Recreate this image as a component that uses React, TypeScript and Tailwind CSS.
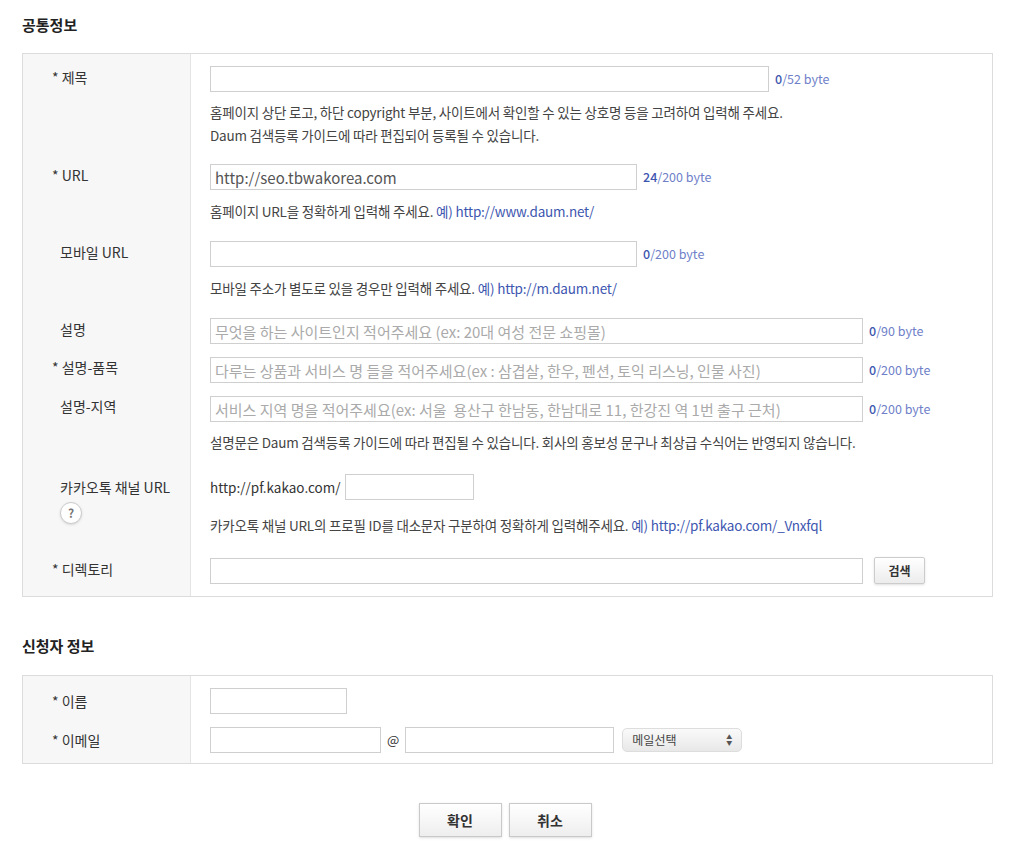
const font = { fontFamily: '"Noto Sans CJK KR", "Noto Sans", sans-serif' };

function Counter({ n, max }: { n: number; max: number }) {
  return (
    <span className="ml-[6px] text-[12.5px] text-[#6f7fc9] whitespace-nowrap">
      <span className="text-[#3d56b0] font-medium">{n}</span>/{max} byte
    </span>
  );
}

const inputCls = 'h-[26px] border border-[#cfcfcf] px-[4px] text-[15px] text-[#555] placeholder:text-[#aaa] outline-none';

function Help({ children }: { children: React.ReactNode }) {
  return <div className="text-[13.5px] text-[#444] leading-[23px] tracking-[-0.2px] pb-[4px]">{children}</div>;
}

function Row({ label, children }: { label: React.ReactNode; children: React.ReactNode }) {
  return (
    <div className="flex">
      {label}
      <div className="flex-1 pl-[19px]">{children}</div>
    </div>
  );
}

const lab = 'w-[168px] shrink-0 bg-[#f7f7f7] border-r border-[#e4e4e4] text-[14px] text-[#333]';

export default function App() {
  return (
    <div className="bg-white w-[1024px] min-h-[841px] px-[22px] pt-[14px]" style={font}>
      <h2 className="text-[15px] font-bold text-[#222] h-[39px] leading-[22px]">공통정보</h2>
      <div className="border border-[#dcdcdc] w-[971px] flex flex-col">
        <Row label={<div className={`${lab} pl-[29px] pt-[13px]`}>* 제목</div>}>
          <div className="pt-[12px] flex items-center"><input className={`${inputCls} w-[559px]`} /><Counter n={0} max={52} /></div>
          <div className="pt-[9px]"><Help>홈페이지 상단 로고, 하단 copyright 부분, 사이트에서 확인할 수 있는 상호명 등을 고려하여 입력해 주세요.<br />Daum 검색등록 가이드에 따라 편집되어 등록될 수 있습니다.</Help></div>
        </Row>
        <Row label={<div className={`${lab} pl-[29px] pt-[14px]`}>* URL</div>}>
          <div className="pt-[13px] flex items-center"><input className={`${inputCls} w-[427px]`} defaultValue="http://seo.tbwakorea.com" /><Counter n={24} max={200} /></div>
          <div className="pt-[10px]"><Help>홈페이지 URL을 정확하게 입력해 주세요. <span className="text-[#3d56b0]">예) http://www.daum.net/</span></Help></div>
        </Row>
        <Row label={<div className={`${lab} pl-[37px] pt-[15px]`}>모바일 URL</div>}>
          <div className="pt-[14px] flex items-center"><input className={`${inputCls} w-[427px]`} /><Counter n={0} max={200} /></div>
          <div className="pt-[10px]"><Help>모바일 주소가 별도로 있을 경우만 입력해 주세요. <span className="text-[#3d56b0]">예) http://m.daum.net/</span></Help></div>
        </Row>
        <Row label={<div className={`${lab} pl-[37px] pt-[15px]`}>설명</div>}>
          <div className="pt-[14px] flex items-center"><input className={`${inputCls} w-[653px]`} placeholder="무엇을 하는 사이트인지 적어주세요 (ex: 20대 여성 전문 쇼핑몰)" /><Counter n={0} max={90} /></div>
        </Row>
        <Row label={<div className={`${lab} pl-[29px] pt-[13px]`}>* 설명-품목</div>}>
          <div className="pt-[13px] flex items-center"><input className={`${inputCls} w-[653px]`} placeholder="다루는 상품과 서비스 명 들을 적어주세요(ex : 삼겹살, 한우, 펜션, 토익 리스닝, 인물 사진)" /><Counter n={0} max={200} /></div>
        </Row>
        <Row label={<div className={`${lab} pl-[37px] pt-[13px]`}>설명-지역</div>}>
          <div className="pt-[13px] flex items-center"><input className={`${inputCls} w-[653px]`} placeholder="서비스 지역 명을 적어주세요(ex: 서울  용산구 한남동, 한남대로 11, 한강진 역 1번 출구 근처)" /><Counter n={0} max={200} /></div>
          <div className="pt-[9px]"><Help>설명문은 Daum 검색등록 가이드에 따라 편집될 수 있습니다. 회사의 홍보성 문구나 최상급 수식어는 반영되지 않습니다.</Help></div>
        </Row>
        <Row label={
          <div className={`${lab} pl-[37px] pt-[19px]`}>
            카카오톡 채널 URL
            <div className="mt-[4px] w-[22px] h-[22px] rounded-full border border-[#ccc] bg-white shadow-sm flex items-center justify-center text-[12px] font-bold text-[#777]">?</div>
          </div>
        }>
          <div className="pt-[16px] flex items-center text-[13.5px] text-[#333]">http://pf.kakao.com/<input className={`${inputCls} w-[129px] ml-[4px]`} /></div>
          <div className="pt-[14px]"><Help>카카오톡 채널 URL의 프로필 ID를 대소문자 구분하여 정확하게 입력해주세요. <span className="text-[#3d56b0]">예) http://pf.kakao.com/_Vnxfql</span></Help></div>
        </Row>
        <Row label={<div className={`${lab} pl-[29px] pt-[18px]`}>* 디렉토리</div>}>
          <div className="pt-[16px] pb-[12px] flex items-center"><input className={`${inputCls} w-[653px]`} />
            <button className="ml-[11px] h-[27px] w-[51px] border border-[#ccc] rounded-[2px] bg-gradient-to-b from-white to-[#ececec] text-[12px] font-bold text-[#333] shadow-sm">검색</button>
          </div>
        </Row>
      </div>

      <h2 className="text-[15px] font-bold text-[#222] mt-[38px] h-[40px] leading-[22px]">신청자 정보</h2>
      <div className="border border-[#dcdcdc] w-[971px] flex">
        <div className={`${lab} pl-[29px] pt-[12px] pb-[10px] leading-[26px]`}>
          <div>* 이름</div>
          <div className="mt-[13px]">* 이메일</div>
        </div>
        <div className="pl-[19px] pt-[12px]">
          <input className={`${inputCls} w-[137px] block`} />
          <div className="mt-[13px] flex items-center">
            <input className={`${inputCls} w-[171px]`} />
            <span className="mx-[6px] text-[13px] text-[#333]">@</span>
            <input className={`${inputCls} w-[209px]`} />
            <div className="ml-[8px] h-[24px] w-[120px] rounded-[5px] border border-[#ddd] bg-gradient-to-b from-[#fafafa] to-[#e8e8e8] flex items-center justify-between px-[9px] text-[12px] text-[#444] whitespace-nowrap">
              <span>메일선택</span>
              <span className="flex flex-col text-[6px] leading-[6px] text-[#555]"><span>▲</span><span>▼</span></span>
            </div>
          </div>
        </div>
      </div>

      <div className="flex justify-center gap-[7px] mt-[39px] pr-[14px]">
        <button className="w-[83px] h-[34px] border border-[#c9c9c9] bg-gradient-to-b from-white to-[#eee] text-[14px] font-bold text-[#333] shadow-sm">확인</button>
        <button className="w-[83px] h-[34px] border border-[#c9c9c9] bg-gradient-to-b from-white to-[#eee] text-[14px] font-bold text-[#333] shadow-sm">취소</button>
      </div>
    </div>
  );
}
